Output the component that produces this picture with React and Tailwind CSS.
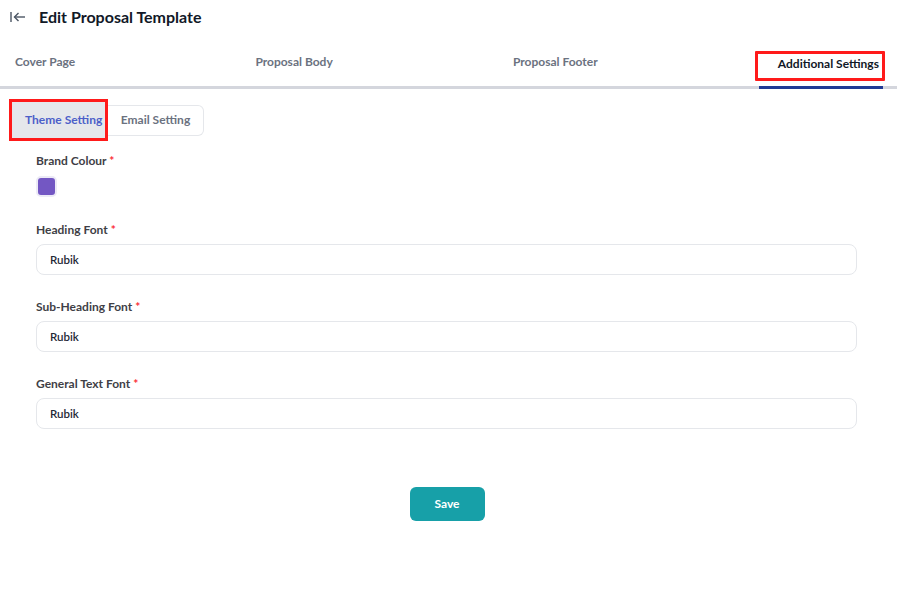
import React from 'react';

const tabs = ['Cover Page', 'Proposal Body', 'Proposal Footer', 'Additional Settings'];

function BackIcon() {
  return (
    <svg width="16" height="12" viewBox="0 0 16 12" fill="none" stroke="#4b5563" strokeWidth="1.4">
      <path d="M1 1v10" />
      <path d="M15 6H4.5" />
      <path d="M8.5 2L4.5 6l4 4" />
    </svg>
  );
}

function Field({ label, value }) {
  return (
    <div className="flex flex-col">
      <label className="text-[12px] leading-[16px] font-bold text-[#3f3f46] mb-[6px]">
        {label} <span className="text-red-500">*</span>
      </label>
      <div className="h-[31px] w-[821px] rounded-lg border border-[#e5e7eb] flex items-center pl-[13px] text-[11.5px] font-semibold text-[#1f2937]">
        {value}
      </div>
    </div>
  );
}

export default function App() {
  return (
    <div className="w-[902px] h-[595px] bg-white font-['Lato',sans-serif] overflow-hidden">
      {/* header */}
      <div className="flex items-center h-[34px] pl-[10px] gap-[13px]">
        <BackIcon />
        <h1 className="text-[16px] font-bold text-[#111827]">Edit Proposal Template</h1>
      </div>

      {/* main tabs */}
      <div className="w-[897px] mt-[20px] flex justify-between leading-[16px] border-b-[3px] border-[#d4d6dd] pl-[15px] pr-[18px] pb-[14px]">
        {tabs.map((t, i) =>
          i === 3 ? (
            <div key={t} className="relative">
              <span className="text-[12px] leading-[16px] font-bold text-[#111827]">{t}</span>
              <div className="absolute -left-[23px] -right-[6px] -top-[3px] -bottom-[9px] border-[3px] border-[#ff1a1a] rounded-[1px]" />
              <div className="absolute -bottom-[17px] -left-[19px] -right-[4px] h-[3px] bg-[#213a94]" />
            </div>
          ) : (
            <span key={t} className="text-[12px] leading-[16px] font-bold text-[#6b7280]">{t}</span>
          )
        )}
      </div>

      {/* sub tabs */}
      <div className="ml-[9px] mt-[10px] flex">
        <div className="flex items-center h-[42px]">
          <div className="h-[42px] w-[99px] border-[3px] border-[#ff1a1a] bg-[#e5e7eb] flex items-center pl-[13px] relative z-10">
            <span className="text-[12px] font-bold text-[#4c5fc9] whitespace-nowrap">Theme Setting</span>
          </div>
          <div className="h-[31px] -ml-[6px] pl-[6px] w-[102px] rounded-r-md border border-l-0 border-[#e5e7eb] flex items-center justify-center">
            <span className="text-[12px] font-bold text-[#6b7280]">Email Setting</span>
          </div>
        </div>
      </div>

      {/* form */}
      <div className="pl-[36px] mt-[12px] flex flex-col">
        <div className="flex flex-col">
          <label className="text-[12px] leading-[16px] font-bold text-[#3f3f46] mb-[7px]">
            Brand Colour <span className="text-red-500">*</span>
          </label>
          <div className="w-[21px] h-[21px] rounded-[5px] border-2 border-[#eceaf6] bg-[#7357c3]" />
        </div>
        <div className="mt-[25px] flex flex-col gap-[24px]">
          <Field label="Heading Font" value="Rubik" />
          <Field label="Sub-Heading Font" value="Rubik" />
          <Field label="General Text Font" value="Rubik" />
        </div>
      </div>

      <div className="flex justify-center mt-[58px] pr-[8px]">
        <button className="w-[75px] h-[34px] rounded-md bg-[#17a0a8] text-white text-[12px] font-bold">
          Save
        </button>
      </div>
    </div>
  );
}
